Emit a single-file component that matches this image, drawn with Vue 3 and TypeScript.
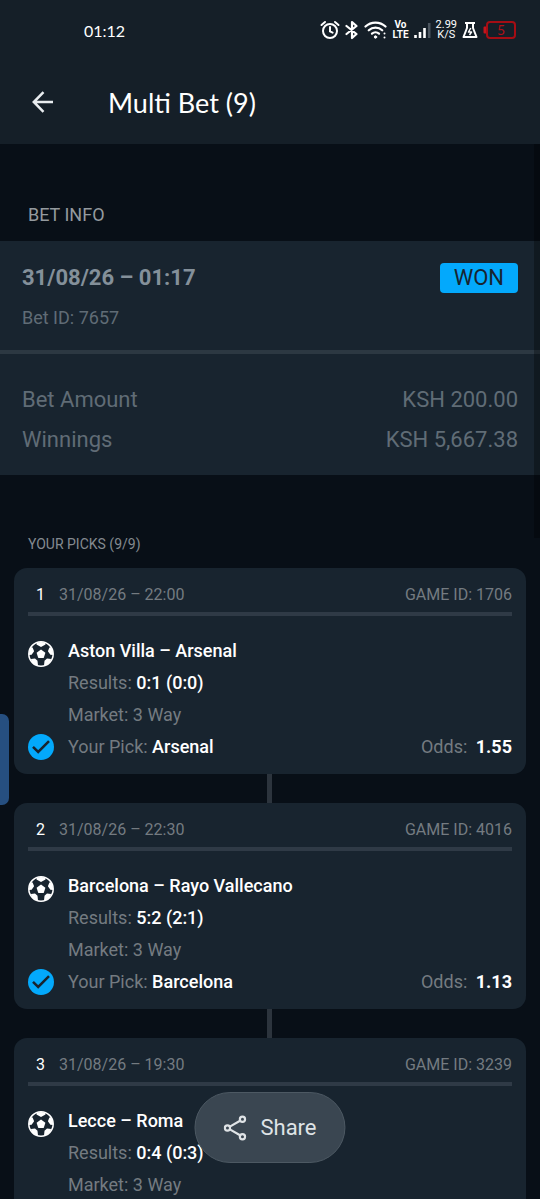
<script setup lang="ts">
interface Pick {
  no: number
  date: string
  gameId: number
  match: string
  result: string
  market: string
  pick: string
  odds: string
}

const picks: Pick[] = [
  { no: 1, date: '31/08/26 – 22:00', gameId: 1706, match: 'Aston Villa – Arsenal', result: '0:1 (0:0)', market: '3 Way', pick: 'Arsenal', odds: '1.55' },
  { no: 2, date: '31/08/26 – 22:30', gameId: 4016, match: 'Barcelona – Rayo Vallecano', result: '5:2 (2:1)', market: '3 Way', pick: 'Barcelona', odds: '1.13' },
  { no: 3, date: '31/08/26 – 19:30', gameId: 3239, match: 'Lecce – Roma', result: '0:4 (0:3)', market: '3 Way', pick: '', odds: '' },
]
</script>

<template>
  <div class="screen">
    <header class="top">
      <div class="status">
        <span class="clock">01:12</span>
        <div class="indicators">
          <svg width="20" height="20" viewBox="0 0 20 20" fill="none" stroke="#fff" stroke-width="2" stroke-linecap="round">
            <circle cx="10" cy="11" r="7" /><path d="M10 7v4.400l2.600 1.200M1.500 5 5 2M18.500 5 15 2" />
          </svg>
          <svg width="14" height="20" viewBox="0 0 14 20" fill="none" stroke="#fff" stroke-width="2.200" stroke-linejoin="round" stroke-linecap="round">
            <path d="M1.500 6 11.500 14 7 18V2l4.500 4L1.500 14" />
          </svg>
          <svg width="23" height="20" viewBox="0 0 23 20" fill="none" stroke="#fff" stroke-width="2.200" stroke-linecap="round">
            <path d="M1.500 6.500c5.500-5.300 14.500-5.300 20 0M4.800 10.300c3.700-3.500 9.700-3.500 13.400 0M8 13.700c2-1.700 5-1.700 7 0" />
            <circle cx="11.500" cy="17" r="1.200" fill="#fff" stroke-width="1" />
            <path d="M20.500 13.500v.1M20.500 17.500v.1" stroke-width="2" />
          </svg>
          <span class="stack bold"><span>Vo</span><span>LTE</span></span>
          <svg width="17" height="18" viewBox="0 0 17 18" stroke-width="2.600" stroke="#fff">
            <path d="M1.500 14v3M6 11v6M10.500 7v10" /><path d="M15.200 2v15" stroke="#4b555f" />
          </svg>
          <span class="stack"><span>2.99</span><span>K/S</span></span>
          <svg width="16" height="18" viewBox="0 0 16 18" fill="none" stroke="#fff" stroke-width="2" stroke-linejoin="round">
            <path d="M3 2h10M5 2v5L1.500 16h13L11 7V2" /><path d="M8.800 7 6.500 11h3L7.500 14" stroke-width="1.500" />
          </svg>
          <svg class="battery" width="33" height="18" viewBox="0 0 33 18">
            <rect x="4" y="1" width="28" height="16" rx="3" fill="none" stroke="#a50d14" stroke-width="2" />
            <path d="M3 5.500v7H1.500a1 1 0 0 1-1-1v-5a1 1 0 0 1 1-1z" fill="#c4141c" />
            <text x="18" y="14" text-anchor="middle" fill="#b01018">5</text>
          </svg>
        </div>
      </div>
      <div class="bar">
        <button class="back" type="button" aria-label="Back">
          <svg width="22" height="22" viewBox="0 0 22 22" fill="none" stroke="#e8ecef" stroke-width="2.500">
            <path d="M21 11H2M11.500 1.200 1.800 11l9.700 9.800" />
          </svg>
        </button>
        <h1>Multi Bet (9)</h1>
      </div>
    </header>

    <main>
      <h2 class="info-title">BET INFO</h2>
      <section class="info">
        <div class="summary">
          <div class="line">
            <strong class="when">31/08/26 – 01:17</strong>
            <span class="badge">WON</span>
          </div>
          <div class="bet-id">Bet ID: 7657</div>
        </div>
        <dl class="amounts">
          <div class="line"><dt>Bet Amount</dt><dd>KSH 200.00</dd></div>
          <div class="line"><dt>Winnings</dt><dd>KSH 5,667.38</dd></div>
        </dl>
      </section>

      <h2 class="picks-title">YOUR PICKS (9/9)</h2>
      <ol class="picks">
        <li v-for="p in picks" :key="p.no" class="card">
          <div class="card-head">
            <span class="no">{{ p.no }}</span>
            <span>{{ p.date }}</span>
            <span class="game">GAME ID: {{ p.gameId }}</span>
          </div>
          <div class="row">
            <svg class="ball" width="26" height="26" viewBox="0 0 26 26">
              <defs><clipPath :id="'ball' + p.no"><circle cx="13" cy="13" r="12" /></clipPath></defs>
              <g :clip-path="`url(#ball${p.no})`" fill="#fff">
                <path d="M13 8.600l4.400 3.200-1.700 5.200h-5.400l-1.700-5.200z" />
                <path d="M8.500 0h9v3.500L13 6 8.500 3.500z" />
                <path d="M26 6v8l-3.600-.2-2.500-3.600 1.500-3.700z" />
                <path d="M0 6v8l3.600-.2 2.500-3.600-1.500-3.700z" />
                <path d="M16 24.500l.5-4.700 2.500-2.400 4 .5-1 5.100-4 3z" />
                <path d="M10 24.500l-.5-4.700L7 17.400l-4 .5 1 5.100 4 3z" />
              </g>
              <circle cx="13" cy="13" r="12.200" fill="none" stroke="#fff" stroke-width="1.500" />
            </svg>
            <strong>{{ p.match }}</strong>
          </div>
          <div class="row"><span class="text">Results: <strong>{{ p.result }}</strong></span></div>
          <div class="row"><span class="text">Market: {{ p.market }}</span></div>
          <div class="row">
            <template v-if="p.pick">
              <svg width="26" height="26" viewBox="0 0 26 26">
                <circle cx="13" cy="13" r="13" fill="#03a9fc" />
                <path d="M5 12.800l5.200 5.200L21 7.200" fill="none" stroke="#18242f" stroke-width="2.500" />
              </svg>
              <span class="text">Your Pick: <strong>{{ p.pick }}</strong></span>
              <span class="odds">Odds: <strong>{{ p.odds }}</strong></span>
            </template>
          </div>
        </li>
      </ol>
    </main>

    <div class="scroll-thumb"></div>
    <div class="edge-handle"></div>
    <button class="share" type="button">
      <svg width="24" height="26" viewBox="0 0 24 26" fill="none" stroke="#dfe3e6" stroke-width="2.200">
        <circle cx="4" cy="13" r="2.600" /><circle cx="19" cy="4.300" r="2.600" /><circle cx="19" cy="21.700" r="2.600" />
        <path d="M6.400 11.600l10.200-5.900M6.400 14.400l10.200 5.900" />
      </svg>
      Share
    </button>
  </div>
</template>

<style>
body {
  margin: 0;
  background: #080f17;
}
</style>

<style scoped>
.screen {
  height: 100vh;
  display: flex;
  flex-direction: column;
  background: #080f17;
  color: #747b81;
  font-family: Roboto, "Liberation Sans", sans-serif;
}
h1, h2, dl, dd, ol {
  margin: 0;
  padding: 0;
  font-weight: 400;
}
.top {
  flex: none;
  background: #151f28;
  color: #fff;
  font-family: Lato, sans-serif;
}
.status {
  height: 60px;
  padding: 0 24px 0 84px;
  display: flex;
  align-items: center;
  justify-content: space-between;
}
.clock {
  font-size: 16px;
}
.indicators {
  display: flex;
  align-items: center;
  gap: 5px;
}
.stack {
  display: flex;
  flex-direction: column;
  align-items: center;
  font-family: Roboto, sans-serif;
  font-size: 11px;
  line-height: 10px;
}
.bold {
  font-size: 10px;
  font-weight: 700;
}
.battery {
  font-size: 14px;
}
.bar {
  height: 84px;
  padding-left: 32px;
  box-sizing: border-box;
  display: flex;
  align-items: center;
  gap: 54px;
}
.back {
  display: flex;
  padding: 0;
  border: 0;
  background: none;
}
h1 {
  font-size: 27px;
}
main {
  flex: 1;
  min-height: 0;
  overflow-y: auto;
  scrollbar-width: none;
}
.info-title {
  padding: 59px 28px 15px;
  font-size: 18px;
  line-height: 23px;
  color: #949a9f;
}
.info {
  background: #18242f;
}
.summary {
  padding: 22px 22px 20px;
  border-bottom: 4px solid #2c3842;
}
.line {
  display: flex;
  justify-content: space-between;
  align-items: center;
}
.when {
  font-size: 22px;
  line-height: 30px;
  color: #84909a;
}
.badge {
  padding: 0 14px;
  border-radius: 4px;
  background: #03a9fc;
  color: #18242f;
  font-size: 22px;
  line-height: 30px;
}
.bet-id {
  margin-top: 13px;
  font-size: 18px;
  line-height: 24px;
  color: #606c76;
}
.amounts {
  padding: 26px 22px 15px;
  font-size: 22px;
  line-height: 40px;
  color: #606c76;
}
.picks-title {
  padding: 59px 28px 14px;
  font-size: 14px;
  line-height: 20px;
  color: #848a90;
}
.picks {
  list-style: none;
  padding: 0 14px;
}
.card {
  padding: 11px 14px;
  border-radius: 13px;
  background: #18242f;
  font-size: 18px;
}
.card + .card {
  margin-top: 29px;
  position: relative;
}
.card + .card::before {
  content: "";
  position: absolute;
  left: 50%;
  bottom: 100%;
  width: 5px;
  height: 29px;
  margin-left: -3px;
  background: #2c343d;
}
.card-head {
  display: flex;
  gap: 14px;
  padding: 0 0 1px 8px;
  margin-bottom: 19px;
  border-bottom: 4px solid #2f3a46;
  font-size: 16px;
  line-height: 32px;
}
.no {
  color: #fff;
}
.game {
  margin-left: auto;
}
.row {
  display: flex;
  align-items: center;
  gap: 14px;
  height: 32px;
  line-height: 32px;
}
.row > :not(svg):first-child {
  margin-left: 40px;
}
.ball {
  margin-top: 6px;
}
.row strong {
  color: #fff;
  font-weight: 500;
}
.odds {
  margin-left: auto;
}
.row .odds strong {
  margin-left: 4px;
  font-weight: 700;
}
.scroll-thumb {
  position: fixed;
  top: 144px;
  right: 0;
  width: 6px;
  height: 394px;
  background: rgba(0, 0, 0, 0.3);
}
.edge-handle {
  position: fixed;
  left: 0;
  top: 714px;
  width: 9px;
  height: 91px;
  border-radius: 0 7px 7px 0;
  background: #264f80;
}
.share {
  position: fixed;
  left: 50%;
  bottom: 36px;
  transform: translateX(-50%);
  display: flex;
  align-items: center;
  gap: 13px;
  height: 71px;
  padding: 0 28px;
  border: 1px solid #4d5963;
  border-radius: 36px;
  background: #3a4651;
  color: #dfe3e6;
  font-family: inherit;
  font-size: 22px;
}
</style>
